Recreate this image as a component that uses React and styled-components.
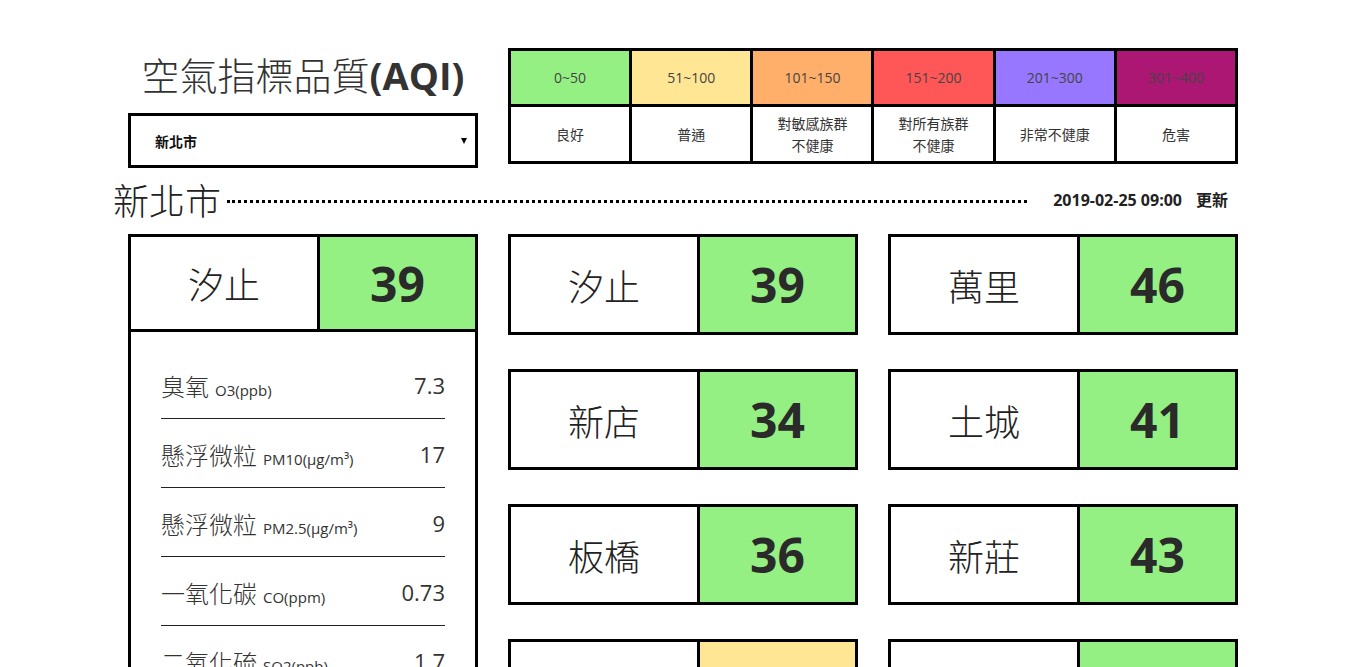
import React from 'react';
import styled, { createGlobalStyle } from 'styled-components';

const Global = createGlobalStyle`
    body {
        margin: 0;
        background: #fff;
        color: #333;
        font-family: "Open Sans", "Noto Sans CJK TC", sans-serif;
    }
    * { box-sizing: border-box; }
`
const Container = styled.div`
    width: 1110px;
    margin: 0 auto;
    padding-top: 48px;
`
const Header = styled.div`
    display: flex;
    gap: 30px;
    align-items: flex-start;
`
const HeaderLeft = styled.div`
    width: 350px;
    display: flex;
    flex-direction: column;
    align-items: center;
`
const Title = styled.h1`
    margin: 2px 0 0;
    font-size: 38px;
    font-weight: 300;
    line-height: 48px;
    color: #333;
    white-space: nowrap;
    font-family: "Noto Sans CJK TC", sans-serif;
    b {
        font-family: "Open Sans", sans-serif;
        font-weight: 700;
    }
`
const SelectBox = styled.div`
    position: relative;
    width: 350px;
    height: 55px;
    margin-top: 14px;
    border: 3px solid #000;
    display: flex;
    align-items: center;
    padding-left: 24px;
    font-size: 14px;
    font-weight: 700;
    color: #111;
    font-family: "Noto Sans CJK TC", sans-serif;
    &::after {
        content: '';
        position: absolute;
        right: 8px;
        top: 22px;
        border-left: 3px solid transparent;
        border-right: 3px solid transparent;
        border-top: 6px solid #000;
    }
`
const Legend = styled.div`
    width: 730px;
    display: grid;
    grid-template-columns: repeat(6, 1fr);
    grid-template-rows: 53px 54px;
    border: 3px solid #000;
    background: #000;
    gap: 3px;
`
const Range = styled.div`
    background: ${p => p.color};
    display: flex;
    align-items: center;
    justify-content: center;
    font-size: 14px;
    color: #444;
`
const Level = styled.div`
    background: #fff;
    display: flex;
    align-items: center;
    justify-content: center;
    text-align: center;
    font-size: 14px;
    line-height: 22px;
    color: #333;
    font-family: "Noto Sans CJK TC", sans-serif;
`
const CityBar = styled.div`
    display: flex;
    align-items: center;
    margin: 9px 0 13px -15px;
    height: 44px;
`
const CityName = styled.h2`
    margin: 0;
    font-size: 36px;
    font-weight: 300;
    color: #222;
    font-family: "Noto Sans CJK TC", sans-serif;
    line-height: 44px;
`
const Dots = styled.div`
    flex: 1;
    margin: 4px 26px 0 6px;
    border-bottom: 3px dotted #000;
`
const Updated = styled.div`
    font-size: 16px;
    font-weight: 700;
    color: #222;
    margin-right: 10px;
    span {
        margin-left: 14px;
        font-size: 16px;
        font-family: "Noto Sans CJK TC", sans-serif;
    }
`
const Main = styled.div`
    display: flex;
    gap: 30px;
    align-items: flex-start;
`
const Grid = styled.div`
    width: 730px;
    display: grid;
    grid-template-columns: 1fr 1fr;
    column-gap: 30px;
    row-gap: 34px;
`
const Card = styled.div`
    width: 350px;
    border: 3px solid #000;
`
const CardTop = styled.div`
    display: flex;
    height: 95px;
    border-bottom: ${p => (p.$open ? '3px solid #000' : 'none')};
`
const Site = styled.div`
    width: 186px;
    display: flex;
    align-items: center;
    justify-content: center;
    font-size: 36px;
    font-weight: 300;
    color: #222;
    font-family: "Noto Sans CJK TC", sans-serif;
`
const Value = styled.div`
    flex: 1;
    border-left: 3px solid #000;
    background: ${p => p.color};
    display: flex;
    align-items: center;
    justify-content: center;
    font-size: 48px;
    font-weight: 700;
    color: #2a2a2a;
`
const Details = styled.ul`
    list-style: none;
    margin: 0;
    padding: 18px 30px 0;
`
const Item = styled.li`
    height: 69px;
    border-bottom: 1px solid #222;
    display: flex;
    align-items: center;
    justify-content: space-between;
    padding-top: 2px;
`
const Label = styled.div`
    font-size: 24px;
    font-weight: 300;
    color: #333;
    font-family: "Noto Sans CJK TC", sans-serif;
    small {
        font-family: "Open Sans", sans-serif;
        font-size: 15px;
        margin-left: 6px;
        font-weight: 400;
    }
`
const Num = styled.div`
    font-size: 22px;
    color: #333;
`

const colors = ['#95f084', '#ffe695', '#ffaf6a', '#ff5757', '#9777ff', '#ad1774'];
const ranges = ['0~50', '51~100', '101~150', '151~200', '201~300', '301~400'];
const levels = ['良好', '普通', ['對敏感族群', '不健康'], ['對所有族群', '不健康'], '非常不健康', '危害'];

const colorOf = (v) => (v <= 50 ? colors[0] : v <= 100 ? colors[1] : colors[2]);

const sites = [
    ['汐止', 39], ['萬里', 46], ['新店', 34], ['土城', 41],
    ['板橋', 36], ['新莊', 43], ['菜寮', 52], ['林口', 45],
    ['淡水', 38], ['三重', 47],
];

const items = [
    ['臭氧', 'O3(ppb)', '7.3'],
    ['懸浮微粒', 'PM10(μg/m³)', '17'],
    ['懸浮微粒', 'PM2.5(μg/m³)', '9'],
    ['一氧化碳', 'CO(ppm)', '0.73'],
    ['二氧化硫', 'SO2(ppb)', '1.7'],
    ['二氧化氮', 'NO2(ppb)', '18'],
];

const App = () => {
    return (
        <Container>
            <Global />
            <Header>
                <HeaderLeft>
                    <Title>空氣指標品質<b>(AQI)</b></Title>
                    <SelectBox>新北市</SelectBox>
                </HeaderLeft>
                <Legend>
                    {ranges.map((r, i) => <Range key={r} color={colors[i]}>{r}</Range>)}
                    {levels.map((l, i) => (
                        <Level key={i}>
                            {Array.isArray(l) ? <div>{l[0]}<br />{l[1]}</div> : l}
                        </Level>
                    ))}
                </Legend>
            </Header>
            <CityBar>
                <CityName>新北市</CityName>
                <Dots />
                <Updated>2019-02-25 09:00<span>更新</span></Updated>
            </CityBar>
            <Main>
                <Card>
                    <CardTop $open>
                        <Site>汐止</Site>
                        <Value color={colorOf(39)}>39</Value>
                    </CardTop>
                    <Details>
                        {items.map(([name, unit, val], i) => (
                            <Item key={i}>
                                <Label>{name}<small>{unit}</small></Label>
                                <Num>{val}</Num>
                            </Item>
                        ))}
                    </Details>
                </Card>
                <Grid>
                    {sites.map(([name, v]) => (
                        <Card key={name}>
                            <CardTop>
                                <Site>{name}</Site>
                                <Value color={colorOf(v)}>{v}</Value>
                            </CardTop>
                        </Card>
                    ))}
                </Grid>
            </Main>
        </Container>
    );
};

export default App;
